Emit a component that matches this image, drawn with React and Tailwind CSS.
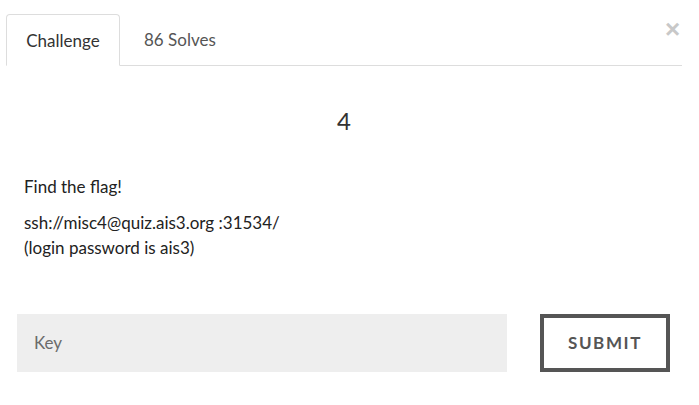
export default function App() {
  return (
    <div className="relative w-[699px] h-[405px] bg-white overflow-hidden" style={{ fontFamily: "Lato, 'Open Sans', sans-serif" }}>
      <div className="pt-[14px] pl-[6px] pr-[17px]">
        <div className="flex border-b border-[#dddddd]">
          <div className="-mb-px w-[114px] h-[52px] flex items-center justify-center pt-[1px] border border-[#dddddd] border-b-white rounded-t-[4px] bg-white text-[17px] text-[#333333]">
            Challenge
          </div>
          <div className="h-[51px] flex items-center pl-[24px] pt-[1px] text-[17px] text-[#555555]">
            86 Solves
          </div>
        </div>
      </div>
      <button className="absolute top-[16px] left-[665px] text-[26px] leading-none text-[#c8c8c8] font-bold" style={{ fontFamily: "'Liberation Sans', Arial, sans-serif" }}>
        ×
      </button>
      <div className="pl-[6px] pr-[17px]">
        <div className="text-center text-[24px] text-[#333333] mt-[39px] leading-[32px]">4</div>
        <div className="pl-[18px] mt-[37px] text-[17px] text-[#222222] leading-[25px]">
          <p className="mb-[11px]">Find the flag!</p>
          <p>ssh://misc4@quiz.ais3.org :31534/<br />(login password is ais3)</p>
        </div>
      </div>
      <div className="flex pl-[17px] mt-[54px] gap-[33px]">
        <div className="w-[490px] h-[58px] bg-[#eeeeee] flex items-center pl-[17px] text-[17px] text-[#6b6b6b]">
          Key
        </div>
        <div className="w-[130px] h-[58px] border-4 border-[#555555] flex items-center justify-center text-[17px] font-bold tracking-[1.6px] text-[#555555]">
          SUBMIT
        </div>
      </div>
    </div>
  );
}
